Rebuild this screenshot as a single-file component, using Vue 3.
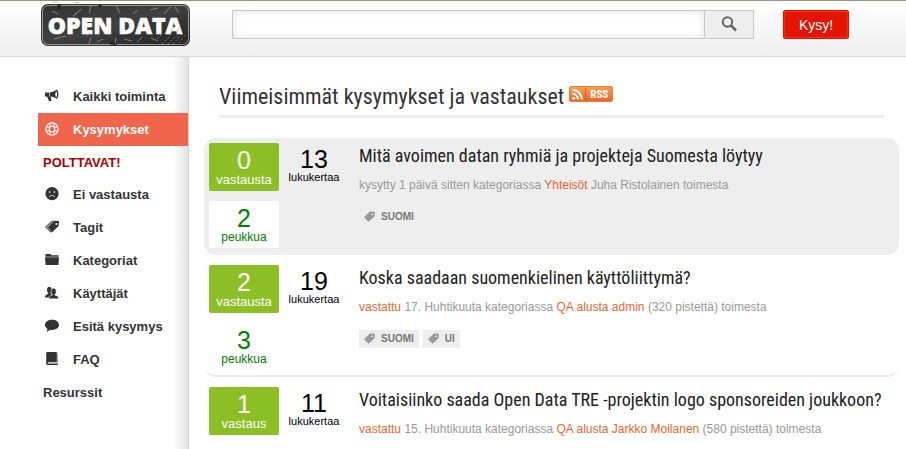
<script setup>
import { ref } from 'vue'

const query = ref('')

const menu = [
  { label: 'Kaikki toiminta', icon: 'horn' },
  { label: 'Kysymykset', icon: 'buoy', active: true },
  { label: 'POLTTAVAT!', hot: true },
  { label: 'Ei vastausta', icon: 'sad' },
  { label: 'Tagit', icon: 'tags' },
  { label: 'Kategoriat', icon: 'folder' },
  { label: 'Käyttäjät', icon: 'users' },
  { label: 'Esitä kysymys', icon: 'bubble' },
  { label: 'FAQ', icon: 'book' },
  { label: 'Resurssit' },
]

const questions = [
  {
    id: 1, title: 'Mitä avoimen datan ryhmiä ja projekteja Suomesta löytyy',
    answers: 0, answerLabel: 'vastausta', views: 13, votes: 2, shaded: true,
    meta: [{ t: 'kysytty 1 päivä sitten kategoriassa' }, { t: 'Yhteisöt', link: true }, { t: 'Juha Ristolainen toimesta' }],
    tags: ['SUOMI'],
  },
  {
    id: 2, title: 'Koska saadaan suomenkielinen käyttöliittymä?',
    answers: 2, answerLabel: 'vastausta', views: 19, votes: 3,
    meta: [{ t: 'vastattu', link: true }, { t: '17. Huhtikuuta kategoriassa' }, { t: 'QA alusta', link: true }, { t: 'admin', link: true }, { t: '(320 pistettä) toimesta' }],
    tags: ['SUOMI', 'UI'],
  },
  {
    id: 3, title: 'Voitaisiinko saada Open Data TRE -projektin logo sponsoreiden joukkoon?',
    answers: 1, answerLabel: 'vastaus', views: 11,
    meta: [{ t: 'vastattu', link: true }, { t: '15. Huhtikuuta kategoriassa' }, { t: 'QA alusta', link: true }, { t: 'Jarkko Moilanen', link: true }, { t: '(580 pistettä) toimesta' }],
    tags: [],
  },
]
</script>

<template>
  <div class="page">
    <header class="top">
      <a class="logo" href="#" aria-label="Open Data">
        <svg width="151" height="46" viewBox="0 0 151 46">
          <defs>
            <linearGradient id="plate" x1="0" y1="0" x2="1" y2="1">
              <stop offset="0" stop-color="#333" />
              <stop offset=".5" stop-color="#404040" />
              <stop offset="1" stop-color="#222" />
            </linearGradient>
          </defs>
          <path d="M12 1h6M35 1.500h4" stroke="#c9c9c9" />
          <rect x="1" y="3" width="149" height="42" rx="7" fill="url(#plate)" />
          <rect x="2.500" y="4.500" width="146" height="39" rx="6" fill="none" stroke="#999" />
          <path d="M19 4v4M60 4v2M70 42h5v2" stroke="#222" stroke-width="3" />
          <g fill="none" stroke="#b4b4b4" stroke-width=".6">
            <path d="M35 13l7-5M33 15l4-3M49 12l2-7M80 12l-4-7M93 13l5-4M110 9l8-2M124 13l7-8M139 12l-4-6M12 10l6 3" />
            <path d="M14 38l12-3M51 36l-2 7M75 43l1-6M84 38l8 2M97 41l5-5M63 38l-6 3M111 37l7 3" />
            <path d="M122 43l9-9M128 43l9-9M133 43l10-11M139 42l6-8M117 38l4-4" stroke-dasharray="2 2" />
          </g>
          <text class="logo-text" x="75" y="33" text-anchor="middle">OPEN DATA</text>
          <g fill="none" stroke="#999" stroke-width=".6">
            <path d="M50 32l-4 3M131 30l3-4M137 31l2-4" />
          </g>
        </svg>
      </a>
      <form class="search" @submit.prevent>
        <input v-model="query" type="text" aria-label="Haku" />
        <button type="submit" aria-label="Hae">
          <svg width="16" height="16" viewBox="0 0 16 16" fill="none" stroke="#666">
            <circle cx="6.500" cy="6" r="4.700" stroke-width="2" />
            <path d="M9.700 9.200l5.300 5.300" stroke-width="2.600" />
          </svg>
        </button>
      </form>
      <button class="ask" type="button">Kysy!</button>
    </header>

    <div class="body">
      <nav class="side">
        <a v-for="m in menu" :key="m.label" href="#" :class="{ active: m.active, hot: m.hot, plain: !m.icon }">
          <svg v-if="m.icon" width="14" height="14" viewBox="0 0 14 14" fill="currentColor">
            <template v-if="m.icon === 'horn'">
              <path fill-rule="evenodd" d="M5 3.200C8 3 10.200 2 11.800.5c2.200 2.500 2.200 7 0 9.500C10.200 8.500 8 7.600 5 7.600zm6.200-1c-1.200 1.600-1.200 4.600 0 6.200 1.200-1.600 1.200-4.600 0-6.200z" />
              <path d="M0 3.600h4.400v3.800H0zM2 7.400h3.600l.9 4.600H4z" />
            </template>
            <template v-else-if="m.icon === 'buoy'">
              <circle cx="7" cy="7" r="6.200" fill="none" stroke="currentColor" stroke-width="1.200" />
              <circle cx="7" cy="7" r="2.800" fill="none" stroke="currentColor" stroke-width="1.100" />
              <path d="M5 1v3.500M9 1v3.500M5 9.500V13M9 9.500V13M1 5h3.500M1 9h3.500M9.500 5H13M9.500 9H13" stroke="currentColor" />
            </template>
            <template v-else-if="m.icon === 'sad'">
              <circle cx="7" cy="6.700" r="6.600" />
              <circle cx="4.600" cy="5" r="1" fill="#bbb" /><circle cx="9.400" cy="5" r="1" fill="#bbb" />
              <path d="M4 10c1.600-2 4.400-2 6 0" fill="none" stroke="#ccc" />
            </template>
            <template v-else-if="m.icon === 'tags'">
              <path d="M0 7L6.500.8h2.200L2.200 7.400l4.300 4.400-.9.900z" opacity=".7" />
              <path fill-rule="evenodd" d="M2.800 7.400L9 .8l5 .3-.4 5-6.600 6.500zm7.900-4.200a1 1 0 1 0 1.500 1.300 1 1 0 0 0-1.500-1.300z" />
            </template>
            <path v-else-if="m.icon === 'folder'" d="M.5 1h5l1 1.200h7v1.600H.5zM0 4.200h14L13.400 12H.6z" />
            <template v-else-if="m.icon === 'users'">
              <path d="M2 3.800C2-.2 6.700-.2 6.700 3.800c0 1.500-.4 2.200-1 2.800v1L7 8.800 4 11.500H0C.2 9 1.200 8.800 3.200 8V6.800C2.400 6 2 5.200 2 3.800z" />
              <path d="M6 5.200c0-4 5.200-4 5.200 0 0 1.800-.5 2.600-1.200 3.200v.8c2.700.7 3.600 1.400 3.800 3.600H3.700c.2-2.200 1-2.900 3.500-3.600v-.8C6.400 7.600 6 6.700 6 5.200z" stroke="#fff" stroke-width=".5" />
            </template>
            <path v-else-if="m.icon === 'bubble'" d="M7.200.7C11 .7 14 2.800 14 5.800s-3 5.200-6.800 5.200c-.9 0-1.700-.1-2.400-.3-.8 1-1.900 1.900-3.300 2.100.7-.9 1-2 .9-3.100C1 8.800 0 7.400 0 5.800 0 2.800 3.300.7 7.200.7z" />
            <template v-else>
              <path d="M2.500 0h9.300v10H3.500c-1 0-1 1.500 0 1.500h9.300V13h-10c-1 0-1.600-.7-1.600-1.700V1.500C1.200.5 1.600 0 2.500 0z" />
              <path d="M12.500 1.500v10" stroke="#968a92" stroke-width=".8" /><path d="M3.500 10.700h8.700" stroke="#bbb" />
            </template>
          </svg>
          <span>{{ m.label }}</span>
        </a>
      </nav>

      <main class="main">
        <h1>
          <span>Viimeisimmät kysymykset ja vastaukset</span>
          <a class="rss" href="#">
            <svg width="14" height="13" viewBox="0 0 14 13" fill="none" stroke="#fff" stroke-width="2">
              <circle cx="2.800" cy="10.200" r="1.500" fill="#fff" stroke="none" />
              <path d="M1.500 5.800a5.200 5.200 0 0 1 5.300 5.600M1.500 2a9 9 0 0 1 9.200 9.400" />
            </svg>
            <span>RSS</span>
          </a>
        </h1>

        <article v-for="q in questions" :key="q.id" class="question" :class="{ shaded: q.shaded }">
          <div class="stats">
            <div class="box answers"><b>{{ q.answers }}</b><span>{{ q.answerLabel }}</span></div>
            <div v-if="q.votes" class="box votes"><b>{{ q.votes }}</b><span>peukkua</span></div>
          </div>
          <div class="views"><b>{{ q.views }}</b><span>lukukertaa</span></div>
          <div class="text">
            <h2>{{ q.title }}</h2>
            <p>
              <template v-for="(m, i) in q.meta" :key="i"><a v-if="m.link" href="#">{{ m.t }}</a><span v-else>{{ m.t }}</span>{{ ' ' }}</template>
            </p>
            <div v-if="q.tags.length" class="tags">
              <a v-for="t in q.tags" :key="t" href="#">
                <svg width="11" height="11" viewBox="0 0 12 12" fill="#999">
                  <path fill-rule="evenodd" d="M0 6.800L6.500.5l5.400.3-.3 4.900L5 11.800zM8.400 2.900a.9.900 0 1 0 1.300 1.200.9.900 0 0 0-1.300-1.200z" />
                </svg>
                <span>{{ t }}</span>
              </a>
            </div>
          </div>
        </article>
      </main>
    </div>
  </div>
</template>

<style>
body {
  margin: 0;
  background: #fff;
}
</style>

<style scoped>
.page {
  display: flex;
  flex-direction: column;
  min-height: 100vh;
  font-family: "Liberation Sans", Arial, sans-serif;
  color: #333;
}
a {
  color: inherit;
  text-decoration: none;
}
b {
  font-weight: 400;
}
.top {
  display: flex;
  align-items: flex-start;
  flex: none;
  box-sizing: border-box;
  height: 57px;
  padding: 0 57px 0 40px;
  border-top: 1px solid #999088;
  border-bottom: 1px solid #d8d8d8;
  background: linear-gradient(#fff, #efefef);
}
.logo svg {
  display: block;
}
.logo-text {
  font: 800 23px "Open Sans", sans-serif;
  fill: #fff;
  stroke: #fff;
  stroke-width: 0.6px;
}
.search {
  display: flex;
  flex: 1;
  margin: 9px 29px 0 41px;
}
.search input {
  flex: 1;
  min-width: 0;
  box-sizing: border-box;
  height: 29px;
  padding: 0 8px;
  border: 1px solid #c8c8c8;
  border-right: 0;
  border-radius: 2px 0 0 2px;
  background: #fff;
  box-shadow: inset 0 0 8px #e4e4e4;
  font: 13px "Liberation Sans", sans-serif;
  outline: none;
}
.search button {
  display: flex;
  align-items: center;
  justify-content: center;
  width: 50px;
  height: 29px;
  padding: 0 0 2px;
  border: 1px solid #c8c8c8;
  background: #eee;
}
.ask {
  width: 66px;
  height: 29px;
  margin-top: 9px;
  padding: 0;
  border: 1px solid #e51400;
  border-radius: 2px;
  background: #e51400;
  box-shadow: inset 0 0 2px #f08070;
  color: #fff;
  font: 14px "Liberation Sans", sans-serif;
}
.body {
  display: flex;
  flex: 1;
}
.side {
  display: flex;
  flex-direction: column;
  flex: none;
  box-sizing: border-box;
  width: 189px;
  padding: 23px 0 0 38px;
  border-right: 1px solid #d6d6d6;
  background: linear-gradient(to left, #e2e2e2, #fff 15px);
}
.side a {
  display: flex;
  align-items: center;
  gap: 14px;
  height: 33px;
  padding-left: 7px;
  font-size: 13px;
  font-weight: 700;
}
.side .plain {
  height: 32px;
  padding-left: 5px;
}
.side svg {
  margin-bottom: 2px;
}
.side .active {
  background: #ef664c;
  color: #fff;
}
.side .hot {
  color: #a80000;
}
.main {
  flex: 1;
  min-width: 0;
  padding: 20px 7px 0 15px;
}
h1 {
  display: flex;
  align-items: center;
  gap: 5px;
  height: 38px;
  margin: 0 15px 20px;
  border-bottom: 3px solid #eee;
  font: 400 22px "Roboto Condensed", "Liberation Sans Narrow", sans-serif;
}
.rss {
  display: flex;
  align-items: center;
  justify-content: space-between;
  box-sizing: border-box;
  width: 44px;
  height: 16px;
  margin-bottom: 4px;
  padding: 0 4px 0 1px;
  border: 1px solid #e88038;
  border-radius: 2px;
  background: linear-gradient(#f5a052, #e4692a);
  color: #fff;
  font: 700 11px "Roboto Condensed", "Liberation Sans Narrow", sans-serif;
}
.rss span {
  padding-left: 4px;
  border-left: 1px solid #cf6224;
}
.question {
  display: flex;
  box-sizing: border-box;
  min-height: 117px;
  margin-bottom: 5px;
  padding: 5px;
  border-bottom: 2px solid #eee;
  border-radius: 12px;
}
.question:last-child {
  min-height: 0;
  margin-bottom: 0;
  border-bottom: 0;
}
.shaded {
  background: #eee;
}
.stats {
  display: flex;
  flex-direction: column;
  gap: 10px;
  width: 70px;
}
.box,
.views {
  display: flex;
  flex-direction: column;
  align-items: center;
  box-sizing: border-box;
  width: 70px;
  height: 48px;
  padding-top: 4px;
  border-radius: 2px;
}
.box b,
.views b {
  font-size: 25px;
  line-height: 26px;
}
.box span {
  font-size: 13px;
  line-height: 14px;
}
.answers {
  background: #8cbf26;
  color: #fff;
}
.box.votes {
  height: 47px;
  background: #fff;
  color: #008000;
}
.box.votes span {
  font-size: 12px;
  line-height: 12px;
}
.views {
  padding-top: 3px;
  color: #000;
}
.views span {
  font-size: 11px;
  line-height: 10px;
}
.text {
  flex: 1;
  min-width: 0;
  padding-left: 10px;
}
h2 {
  margin: 0;
  color: #222;
  font: 400 18px/26px "Roboto Condensed", "Liberation Sans Narrow", sans-serif;
}
p {
  margin: 8px 0 15px;
  color: #999;
  font-size: 12px;
  line-height: 16px;
}
p a {
  color: #e5682f;
}
.tags {
  display: flex;
  gap: 4px;
}
.tags a {
  display: flex;
  align-items: center;
  gap: 6px;
  box-sizing: border-box;
  height: 18px;
  padding: 0 5px 2px;
  background: #eee;
  color: #777;
  font-size: 10px;
  font-weight: 700;
}
</style>
